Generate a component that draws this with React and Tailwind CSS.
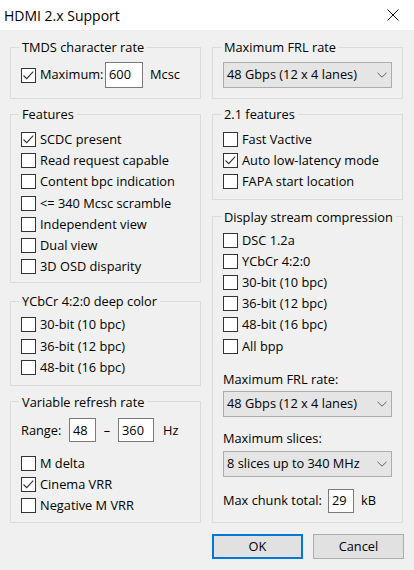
import React from "react";

const Tick = () => (
  <svg width="13" height="13" viewBox="0 0 13 13">
    <path d="M1.5 6.5 L4.7 9.7 L11.2 2.6" fill="none" stroke="#333" strokeWidth="1.1" />
  </svg>
);

const Box = ({ checked }) => (
  <span className="flex h-[15px] w-[15px] shrink-0 items-center justify-center border border-[#333] bg-white">
    {checked && <Tick />}
  </span>
);

const Check = ({ label, checked }) => (
  <div className="flex h-[21.2px] items-center gap-[4px]">
    <Box checked={checked} />
    <span>{label}</span>
  </div>
);

const Group = ({ title, className = "", children }) => (
  <fieldset className={`border border-[#dcdcdc] ${className}`}>
    <legend className="ml-[8px] px-[3px] leading-[16px]">{title}</legend>
    {children}
  </fieldset>
);

const Field = ({ value, className = "" }) => (
  <span className={`flex items-center border border-[#7a7a7a] bg-white px-[3px] ${className}`}>
    {value}
  </span>
);

const Select = ({ value, className = "" }) => (
  <div
    className={`flex h-[26px] items-center justify-between border border-[#adadad] bg-[#e5e5e5] pl-[3px] pr-[4px] ${className}`}
  >
    <span>{value}</span>
    <svg width="10" height="6" viewBox="0 0 10 6">
      <path d="M0.5 0.8 L5 5.2 L9.5 0.8" fill="none" stroke="#606060" strokeWidth="1" />
    </svg>
  </div>
);

export default function App() {
  return (
    <div className="min-h-[570px] w-full bg-[#f0f0f0] font-['Open_Sans','Noto_Sans',sans-serif] text-[12.8px] text-black">
      {/* title bar */}
      <div className="flex h-[30px] items-center justify-between bg-white pl-[4px] pr-[15px]">
        <span className="text-[14px]">HDMI 2.x Support</span>
        <svg width="12" height="12" viewBox="0 0 12 12">
          <path d="M0.5 0.5 L11.5 11.5 M11.5 0.5 L0.5 11.5" stroke="#111" strokeWidth="1" />
        </svg>
      </div>

      <div className="flex gap-[11px] px-[10px] pt-[9px]">
        {/* left column */}
        <div className="flex w-[191px] flex-col">
          <Group title="TMDS character rate">
            <div className="flex h-[26px] items-center px-[10px] mt-[7px] mb-[10px]">
              <Box checked />
              <span className="ml-[4px] w-[65px]">Maximum:</span>
              <Field value="600" className="h-[26px] w-[38px]" />
              <span className="ml-[7px]">Mcsc</span>
            </div>
          </Group>

          <Group title="Features" className="mt-[7px]">
            <div className="px-[10px] pt-[7px] pb-[5px]">
              <Check label="SCDC present" checked />
              <Check label="Read request capable" />
              <Check label="Content bpc indication" />
              <Check label="<= 340 Mcsc scramble" />
              <Check label="Independent view" />
              <Check label="Dual view" />
              <Check label="3D OSD disparity" />
            </div>
          </Group>

          <Group title="YCbCr 4:2:0 deep color" className="mt-[10px]">
            <div className="px-[10px] pt-[5px] pb-[7px]">
              <Check label="30-bit (10 bpc)" />
              <Check label="36-bit (12 bpc)" />
              <Check label="48-bit (16 bpc)" />
            </div>
          </Group>

          <Group title="Variable refresh rate" className="mt-[8px]">
            <div className="px-[10px] pt-[8px] pb-[6px]">
              <div className="flex h-[25px] items-center">
                <span className="w-[48px]">Range:</span>
                <Field value="48" className="h-[24px] w-[27px]" />
                <span className="w-[22px] text-center">–</span>
                <Field value="360" className="h-[24px] w-[36px]" />
                <span className="ml-[9px]">Hz</span>
              </div>
              <div className="mt-[10px]">
                <Check label="M delta" />
                <Check label="Cinema VRR" checked />
                <Check label="Negative M VRR" />
              </div>
            </div>
          </Group>
        </div>

        {/* right column */}
        <div className="flex w-[191px] flex-col">
          <Group title="Maximum FRL rate">
            <div className="px-[10px] pt-[7px] pb-[10px]">
              <Select value="48 Gbps (12 x 4 lanes)" />
            </div>
          </Group>

          <Group title="2.1 features" className="mt-[7px]">
            <div className="px-[10px] pt-[7px] pb-[6px]">
              <Check label="Fast Vactive" />
              <Check label="Auto low-latency mode" checked />
              <Check label="FAPA start location" />
            </div>
          </Group>

          <Group title="Display stream compression" className="mt-[9px]">
            <div className="px-[10px] pt-[5px] pb-[9px]">
              <Check label="DSC 1.2a" />
              <Check label="YCbCr 4:2:0" />
              <Check label="30-bit (10 bpc)" />
              <Check label="36-bit (12 bpc)" />
              <Check label="48-bit (16 bpc)" />
              <Check label="All bpp" />

              <div className="mt-[14px] leading-[16px]">Maximum FRL rate:</div>
              <Select value="48 Gbps (12 x 4 lanes)" className="mt-[4px]" />

              <div className="mt-[13px] leading-[16px]">Maximum slices:</div>
              <Select value="8 slices up to 340 MHz" className="mt-[5px]" />

              <div className="mt-[12px] flex h-[24px] items-center">
                <span className="w-[105px]">Max chunk total:</span>
                <Field value="29" className="h-[24px] w-[26px]" />
                <span className="ml-[7px]">kB</span>
              </div>
            </div>
          </Group>
        </div>
      </div>

      {/* dialog buttons */}
      <div className="mt-[11px] flex justify-end gap-[10px] pr-[10px]">
        <button className="h-[25px] w-[91px] border-2 border-[#0078d7] bg-[#e1e1e1]">OK</button>
        <button className="h-[25px] w-[91px] border border-[#adadad] bg-[#e1e1e1]">Cancel</button>
      </div>
    </div>
  );
}
